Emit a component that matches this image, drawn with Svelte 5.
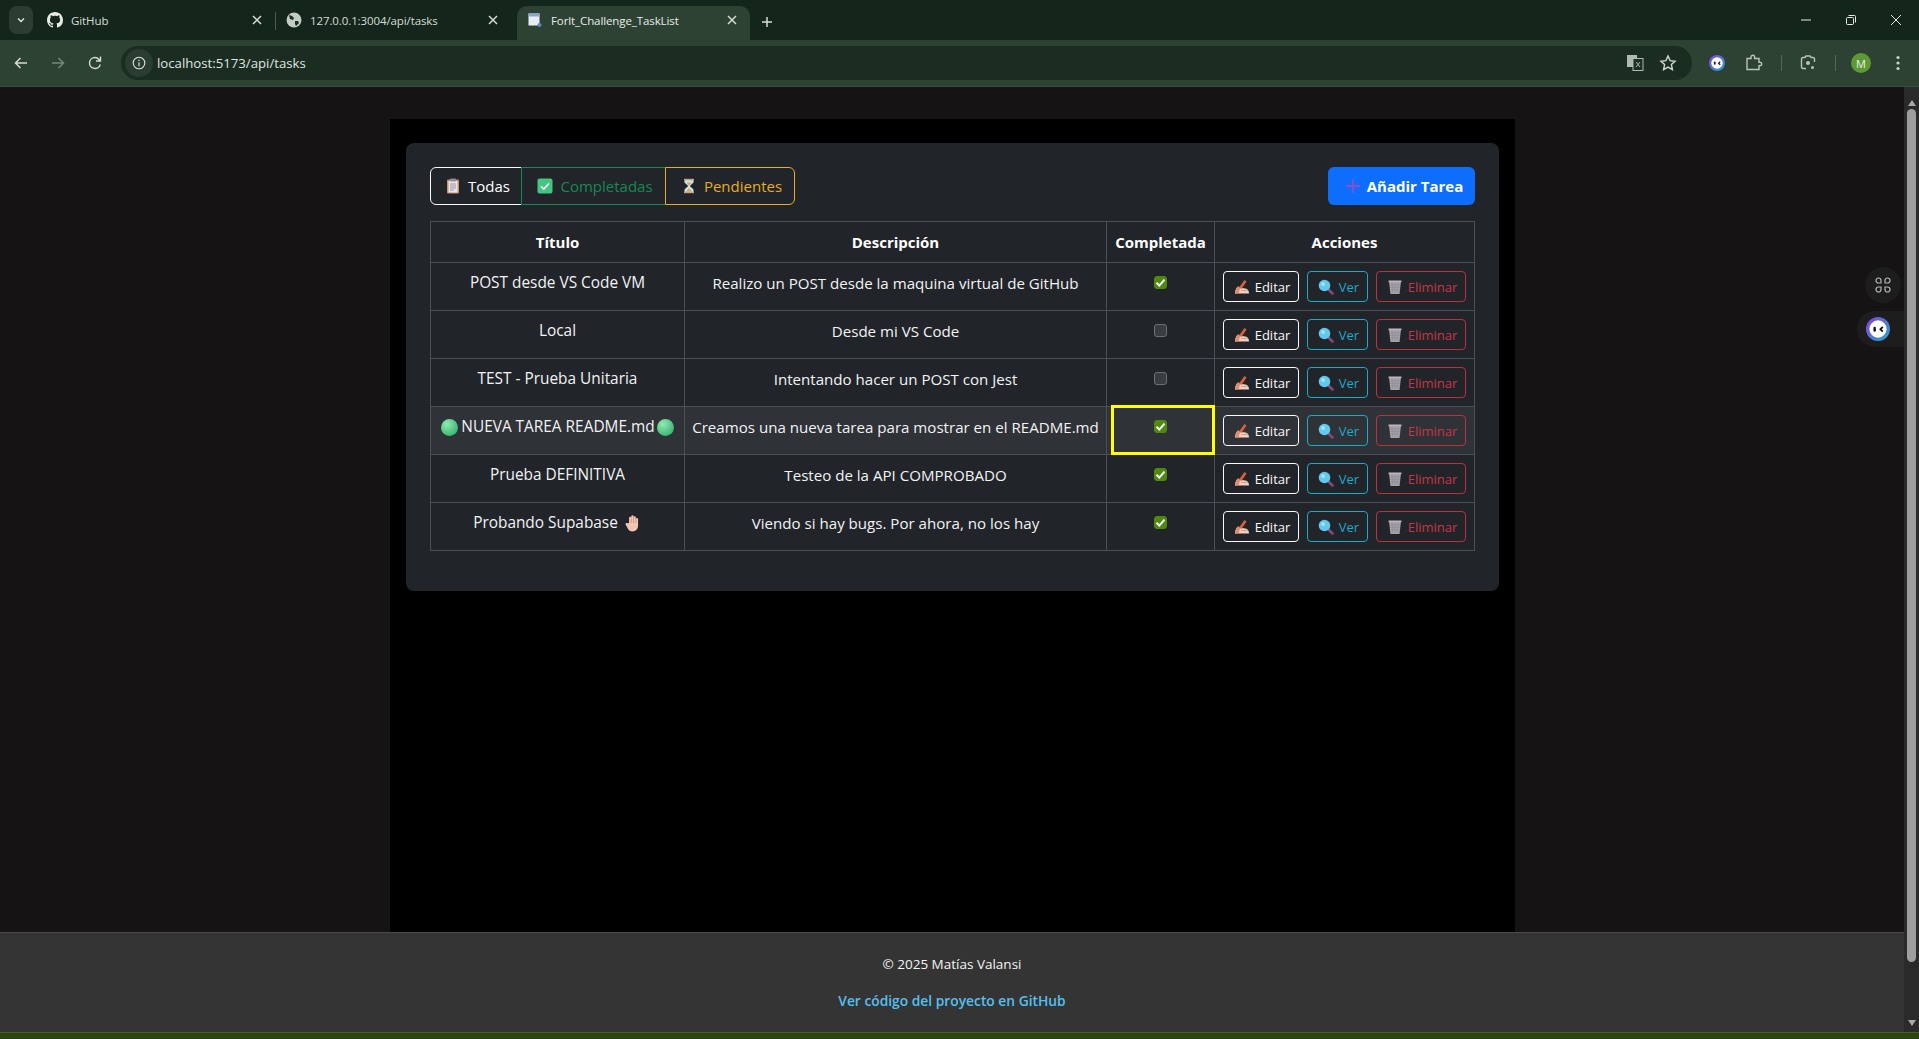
<script>
  const tasks = [
    { title: 'POST desde VS Code VM', desc: 'Realizo un POST desde la maquina virtual de GitHub', done: true },
    { title: 'Local', desc: 'Desde mi VS Code', done: false },
    { title: 'TEST - Prueba Unitaria', desc: 'Intentando hacer un POST con Jest', done: false },
    { title: 'NUEVA TAREA README.md', desc: 'Creamos una nueva tarea para mostrar en el README.md', done: true, hot: true },
    { title: 'Prueba DEFINITIVA', desc: 'Testeo de la API COMPROBADO', done: true },
    { title: 'Probando Supabase', desc: 'Viendo si hay bugs. Por ahora, no los hay', done: true, hand: true }
  ];
</script>

{#snippet clipboard()}
  <svg class="emoji" viewBox="0 0 16 16"><rect x="2" y="1.500" width="12" height="14" rx="1" fill="#c98f6b"/><rect x="3.500" y="3" width="9" height="11.500" fill="#ece6ea"/><rect x="5" y="0.500" width="6" height="3" rx="1" fill="#8d8d99"/><path d="M5 6h6M5 8h6M5 10h6M5 12h4" stroke="#9b93a8" stroke-width="1"/></svg>
{/snippet}
{#snippet checkEmoji()}
  <svg class="emoji" viewBox="0 0 16 16"><rect x="0.500" y="0.500" width="15" height="15" rx="2" fill="#43c77e"/><path d="M4 8.300l2.800 2.800L12 5.500" fill="none" stroke="#fff" stroke-width="1.600"/></svg>
{/snippet}
{#snippet hourglass()}
  <svg class="emoji" viewBox="0 0 16 16"><path d="M3.500 2h9v2.500L8.800 8l3.700 3.500V14h-9v-2.500L7.200 8 3.500 4.500z" fill="#cfe3ee"/><path d="M5.500 4.500h5L8 7.500zM4.800 13.500L8 10l3.200 3.500z" fill="#e8a33d"/><rect x="3" y="0.800" width="10" height="1.600" fill="#c4a58a"/><rect x="3" y="13.600" width="10" height="1.600" fill="#c4a58a"/></svg>
{/snippet}
{#snippet plus()}
  <svg class="emoji plus" viewBox="0 0 16 16"><path d="M8 1v14M1 8h14" stroke="#8a4fc9" stroke-width="1.800"/></svg>
{/snippet}
{#snippet writing()}
  <svg class="emoji" viewBox="0 0 16 16"><path d="M1 14.500c0-3 1.200-5.500 3-7l3.500 1.500 4 .5c2 .5 3.500 2 3.500 5z" fill="#f3d3c0"/><path d="M1 14.500c0-3 1.200-5.500 3-7l2.500 1.500C5.500 10.500 5 12.500 5 14.500z" fill="#dc8f6c"/><path d="M5 8.500L10.500 1l2 1.400L7.500 10z" fill="#d9623c"/><path d="M7.500 11.500h6" stroke="#c99b82" stroke-width="1"/></svg>
{/snippet}
{#snippet magnifier()}
  <svg class="emoji" viewBox="0 0 16 16"><path d="M9.500 9.500l5 5" stroke="#7d4a86" stroke-width="2.600" stroke-linecap="round"/><circle cx="6.500" cy="6.500" r="5.800" fill="#62c8ee"/><circle cx="5" cy="5" r="2" fill="#a3e2f7"/></svg>
{/snippet}
{#snippet trash()}
  <svg class="emoji" viewBox="0 0 16 16"><path d="M2 2.500h12l-1.500 12.500h-9z" fill="#a5a2ab"/><path d="M5 4l.7 10M8 4v10M11 4l-.7 10M3 6h10M3.200 8.500h9.600M3.500 11h9" stroke="#8f8c96" stroke-width="0.700"/><rect x="1.500" y="1.500" width="13" height="1.600" fill="#b9b7bd"/></svg>
{/snippet}
{#snippet hand()}
  <svg class="emoji handicon" viewBox="0 0 16 16"><path d="M4.500 8V3.500a1 1 0 012 0V2a1 1 0 012 0v1a1 1 0 012 0v1.500a1 1 0 012 0V10c0 3.500-2 5.500-5 5.500-2 0-3-1-4-2.500L1.500 9.500c-.6-1 .6-2 1.500-1.200z" fill="#f2c4b2"/><path d="M6.500 4v4M8.500 3v5M10.500 4v4" stroke="#d98f78" stroke-width="0.700"/></svg>
{/snippet}
{#snippet dot()}
  <svg class="emoji dot" viewBox="0 0 16 16"><defs><radialGradient id="ball" cx="0.350" cy="0.300" r="0.800"><stop offset="0" stop-color="#8eeab0"/><stop offset="1" stop-color="#35b06e"/></radialGradient></defs><circle cx="8" cy="8" r="8" fill="url(#ball)"/></svg>
{/snippet}
{#snippet bot(size)}
  <svg width={size} height={size} viewBox="0 0 20 20"><defs><linearGradient id="ring" x1="0" y1="0" x2="1" y2="1"><stop offset="0" stop-color="#8b3fd9"/><stop offset="1" stop-color="#22a7d0"/></linearGradient></defs><circle cx="10" cy="10" r="10" fill="url(#ring)"/><circle cx="10" cy="10" r="7.200" fill="#fff"/><rect x="6.200" y="8.200" width="2" height="4" rx="1" fill="#111"/><path d="M14 8.200l-2 2 2 2" fill="none" stroke="#111" stroke-width="1.500"/></svg>
{/snippet}
{#snippet closeX()}
  <svg class="tabx" width="10" height="10" viewBox="0 0 10 10"><path d="M1 1l8 8M9 1L1 9" stroke="#d3dcd6" stroke-width="1.500"/></svg>
{/snippet}

<div class="window">
  <header class="chrome">
    <div class="tabstrip">
      <button class="tabmenu" aria-label="Tabs">
        <svg width="10" height="10" viewBox="0 0 10 10"><path d="M2 3.500l3 3 3-3" fill="none" stroke="#dfe6e0" stroke-width="1.400"/></svg>
      </button>
      <div class="tab">
        <svg width="16" height="16" viewBox="0 0 16 16"><path fill="#e6ebe7" d="M8 0C3.580 0 0 3.580 0 8c0 3.540 2.290 6.530 5.470 7.590.4.070.55-.17.55-.38 0-.19-.01-.82-.01-1.490-2.010.37-2.530-.49-2.690-.94-.09-.23-.48-.94-.82-1.130-.28-.15-.68-.52-.01-.53.63-.01 1.080.58 1.230.82.720 1.210 1.870.87 2.330.66.070-.52.28-.87.51-1.070-1.780-.2-3.640-.89-3.640-3.950 0-.87.31-1.590.82-2.150-.08-.2-.36-1.020.08-2.120 0 0 .67-.21 2.200.82.64-.18 1.320-.27 2-.27.68 0 1.360.09 2 .27 1.530-1.040 2.200-.82 2.200-.82.44 1.100.16 1.920.08 2.120.51.56.82 1.270.82 2.150 0 3.070-1.870 3.750-3.650 3.950.29.25.54.730.54 1.480 0 1.070-.01 1.930-.01 2.200 0 .21.15.46.55.38A8.013 8.013 0 0016 8c0-4.420-3.580-8-8-8z"/></svg>
        <span class="tabtitle">GitHub</span>
        {@render closeX()}
      </div>
      <i class="tabsep"></i>
      <div class="tab second">
        <svg width="16" height="16" viewBox="0 0 16 16"><circle cx="8" cy="8" r="7.500" fill="#c3cbc5"/><path d="M3 3l3 1 2 2-1 2-3-1zM9 9l3 0 1 2-3 3-1-2z" fill="#1b2c21"/></svg>
        <span class="tabtitle">127.0.0.1:3004/api/tasks</span>
        {@render closeX()}
      </div>
      <div class="tab active">
        <svg width="16" height="16" viewBox="0 0 16 16"><rect x="1.500" y="1.500" width="11" height="12" fill="#e6edf6"/><rect x="1.500" y="1.500" width="11" height="3" fill="#8aa6cc"/><circle cx="12.500" cy="13" r="2" fill="#5b8bcf"/></svg>
        <span class="tabtitle">Forlt_Challenge_TaskList</span>
        {@render closeX()}
      </div>
      <svg class="newtab" width="12" height="12" viewBox="0 0 12 12"><path d="M6 1v10M1 6h10" stroke="#d5ddd7" stroke-width="1.500"/></svg>
      <div class="winctrl">
        <svg width="12" height="12" viewBox="0 0 12 12"><path d="M1 6h10" stroke="#e8e8e8" stroke-width="1"/></svg>
        <svg width="12" height="12" viewBox="0 0 12 12"><rect x="1.500" y="3.500" width="7" height="7" rx="1" fill="none" stroke="#e8e8e8"/><path d="M3.500 1.500h6a1 1 0 011 1v6" fill="none" stroke="#e8e8e8"/></svg>
        <svg width="12" height="12" viewBox="0 0 12 12"><path d="M1 1l10 10M11 1L1 11" stroke="#e8e8e8" stroke-width="1"/></svg>
      </div>
    </div>
    <div class="toolbar">
      <svg class="nav first" width="16" height="16" viewBox="0 0 16 16"><path d="M14 8H3M7.500 3L2.500 8l5 5" fill="none" stroke="#d3dcd5" stroke-width="1.500"/></svg>
      <svg class="nav" width="16" height="16" viewBox="0 0 16 16"><path d="M2 8h11M8.500 3l5 5-5 5" fill="none" stroke="#76867b" stroke-width="1.500"/></svg>
      <svg class="nav" width="16" height="16" viewBox="0 0 16 16"><path d="M13.300 9.500A5.500 5.500 0 118 2.500c1.700 0 3 .8 4 2l1.300 1.500M13.500 1.500V6H9" fill="none" stroke="#d3dcd5" stroke-width="1.400"/></svg>
      <div class="omnibox">
        <span class="siteinfo">
          <svg width="14" height="14" viewBox="0 0 14 14"><circle cx="7" cy="7" r="5.800" fill="none" stroke="#dbe3dd" stroke-width="1.100"/><path d="M7 6.200v4M7 3.800v1.200" stroke="#dbe3dd" stroke-width="1.200"/></svg>
        </span>
        <span class="url">localhost:5173/api/tasks</span>
        <svg class="translate" width="18" height="18" viewBox="0 0 18 18"><rect x="1" y="1" width="10" height="12" fill="#aebbb1"/><rect x="7" y="4.500" width="10" height="12" fill="#1d2e23" stroke="#aebbb1"/><path d="M10 8l4 5M14 8l-4 5" stroke="#aebbb1"/></svg>
        <svg width="18" height="18" viewBox="0 0 18 18"><path d="M9 2l2.100 4.600 5 .6-3.700 3.400 1 5L9 13.100 4.600 15.600l1-5L1.900 7.200l5-.6z" fill="none" stroke="#cfd9d2" stroke-width="1.400"/></svg>
      </div>
      <div class="exts">
        <span class="ext-bot">{@render bot(16)}</span>
        <svg class="puzzle" width="18" height="18" viewBox="0 0 18 18"><path d="M2 4.500h4V3a1.800 1.800 0 013.600 0v1.500H14v3.700h1a1.800 1.800 0 010 3.600h-1V15.500H2z" fill="none" stroke="#b9c5bc" stroke-width="1.400"/></svg>
        <i class="barsep"></i>
        <svg class="lens" width="18" height="18" viewBox="0 0 18 18"><path d="M6 3.500H4a1.500 1.500 0 00-1.500 1.500v8A1.500 1.500 0 004 14.500h3M12 3.500h2a1.500 1.500 0 011.500 1.500v3M6 3.500l1-1.500h4l1 1.500" fill="none" stroke="#b9c5bc" stroke-width="1.400"/><circle cx="9" cy="9" r="2" fill="#b9c5bc"/><circle cx="13.500" cy="13.500" r="1.500" fill="#b9c5bc"/></svg>
        <i class="barsep"></i>
        <span class="avatar">M</span>
        <svg class="dots" width="14" height="18" viewBox="0 0 14 18"><circle cx="7" cy="3.500" r="1.600" fill="#c9d4cc"/><circle cx="7" cy="9" r="1.600" fill="#c9d4cc"/><circle cx="7" cy="14.500" r="1.600" fill="#c9d4cc"/></svg>
      </div>
    </div>
  </header>

  <div class="viewport">
    <div class="page">
      <main class="column">
        <section class="panel">
          <div class="top">
            <div class="filters">
              <button class="filter all">{@render clipboard()} Todas</button>
              <button class="filter done">{@render checkEmoji()} Completadas</button>
              <button class="filter pending">{@render hourglass()} Pendientes</button>
            </div>
            <button class="add">{@render plus()} Añadir Tarea</button>
          </div>

          <table>
            <colgroup>
              <col class="c1" /><col class="c2" /><col class="c3" /><col class="c4" />
            </colgroup>
            <thead>
              <tr><th>Título</th><th>Descripción</th><th>Completada</th><th>Acciones</th></tr>
            </thead>
            <tbody>
              {#each tasks as t}
                <tr class:hot={t.hot}>
                  <td class="titletd">
                    <span class="titlecell">
                      {#if t.hot}{@render dot()}{/if}{t.title}{#if t.hot}{@render dot()}{/if}{#if t.hand}<span class="handgap">{@render hand()}</span>{/if}
                    </span>
                  </td>
                  <td class="desc">{t.desc}</td>
                  <td class="checkcell">
                    <span class="check" class:on={t.done}>
                      {#if t.done}<svg width="11" height="11" viewBox="0 0 11 11"><path d="M1.500 5.800l2.800 2.800 5.200-6" fill="none" stroke="#fff" stroke-width="2"/></svg>{/if}
                    </span>
                    {#if t.hot}<span class="focus"></span>{/if}
                  </td>
                  <td>
                    <div class="actions">
                      <button class="act edit">{@render writing()} Editar</button>
                      <button class="act view">{@render magnifier()} Ver</button>
                      <button class="act del">{@render trash()} Eliminar</button>
                    </div>
                  </td>
                </tr>
              {/each}
            </tbody>
          </table>
        </section>
      </main>

      <footer>
        <p>© 2025 Matías Valansi</p>
        <a href="#top">Ver código del proyecto en GitHub</a>
      </footer>

      <div class="float shortcut">
        <svg width="20" height="20" viewBox="0 0 20 20"><path d="M8 8H5.500A2.500 2.500 0 118 5.500zM12 8V5.500A2.500 2.500 0 1114.500 8zM8 12v2.500A2.500 2.500 0 115.500 12zM12 12h2.500A2.500 2.500 0 1112 14.500z" fill="none" stroke="#b4b4b4" stroke-width="1.200"/></svg>
      </div>
      <div class="float pill">{@render bot(24)}</div>
    </div>

    <div class="scrollbar">
      <i class="arrow up"></i>
      <i class="thumb"></i>
      <i class="arrow down"></i>
    </div>
  </div>

  <div class="taskbar"></div>
</div>

<style>
  :global(body) { margin: 0; background: #000; }

  .window {
    height: 1039px;
    width: 1919px;
    display: flex;
    flex-direction: column;
    overflow: hidden;
    font-family: "Open Sans", "Noto Sans", sans-serif;
    color: #fff;
  }

  /* browser chrome */
  .chrome { flex: none; }
  .tabstrip {
    height: 40px;
    background: #14261b;
    display: flex;
    align-items: flex-end;
    padding-left: 9px;
    font-size: 11.500px;
    color: #d5ddd7;
  }
  .tabmenu {
    width: 24px;
    height: 28px;
    margin-bottom: 6px;
    border: 0;
    border-radius: 8px;
    background: #2b3d31;
    display: flex;
    align-items: center;
    justify-content: center;
    padding: 0;
  }
  .tab {
    width: 242px;
    height: 34px;
    padding: 0 0 6px 14px;
    box-sizing: border-box;
    display: flex;
    align-items: center;
    gap: 8px;
  }
  .tab.second { width: 239px; margin-left: -4px; }
  .tab.active {
    width: 233px;
    margin-left: 6px;
    background: #2e4234;
    border-radius: 10px 10px 0 0;
    color: #e6ece8;
    padding-left: 10px;
  }
  .tabtitle { flex: 1; white-space: nowrap; letter-spacing: -0.100px; }
  .tabx { width: 10px; height: 10px; margin-right: 13px; flex: none; }
  .tabsep { width: 1px; height: 18px; background: #4a5a4f; margin: 0 0 10px 0; }
  .newtab { margin: 0 0 12px 11px; }
  .winctrl {
    margin-left: auto;
    margin-bottom: 14px;
    padding-right: 17px;
    display: flex;
    gap: 33px;
    align-self: flex-end;
  }

  .toolbar {
    height: 47px;
    box-sizing: border-box;
    background: #2e4234;
    display: flex;
    align-items: center;
    padding-left: 13px;
    border-bottom: 1px solid #3a4a3f;
  }
  .nav { margin-right: 21px; }
  .omnibox {
    width: 1571px;
    height: 34px;
    margin-left: -3px;
    box-sizing: border-box;
    background: #1b2c21;
    border-radius: 17px;
    display: flex;
    align-items: center;
    padding: 0 15px 0 4px;
    gap: 15px;
  }
  .siteinfo {
    width: 28px;
    height: 28px;
    border-radius: 50%;
    background: #2b3d31;
    display: flex;
    align-items: center;
    justify-content: center;
  }
  .url { flex: 1; margin-left: -11px; font-size: 13.200px; color: #dfe6e1; }
  .exts {
    flex: 1;
    display: flex;
    align-items: center;
    padding-left: 17px;
    gap: 18px;
  }
  .ext-bot { display: flex; }
  .puzzle { margin-left: 2px; }
  .lens { margin-left: -1px; }
  .barsep { width: 1px; height: 16px; background: #54665a; }
  .avatar {
    width: 20px;
    height: 20px;
    margin-left: -3px;
    border-radius: 50%;
    background: #5d9a36;
    font-size: 11px;
    display: flex;
    align-items: center;
    justify-content: center;
    color: #e9f3e2;
  }
  .dots { margin-left: 2px; }

  /* page */
  .viewport { flex: 1; display: flex; min-height: 0; }
  .page {
    position: relative;
    flex: 1;
    display: flex;
    flex-direction: column;
    background: #151314;
    padding-top: 32px;
  }
  .column {
    flex: 1;
    width: 1125px;
    margin-left: 390px;
    box-sizing: border-box;
    background: #000;
    padding: 24px 16px 0;
  }
  .panel {
    width: 1093px;
    height: 448px;
    box-sizing: border-box;
    background: #212529;
    border-radius: 8px;
    padding: 24px;
  }
  .top {
    display: flex;
    justify-content: space-between;
    align-items: flex-start;
    margin-bottom: 16px;
  }
  .filters { display: flex; }
  .filter {
    height: 38px;
    box-sizing: border-box;
    background: transparent;
    font: inherit;
    font-size: 15px;
    border: 1px solid;
    padding: 0 0 0 3px;
    display: flex;
    align-items: center;
    justify-content: center;
    gap: 7px;
  }
  .filter.all { width: 92px; color: #fff; border-color: #f8f9fa; border-radius: 6px 0 0 6px; }
  .filter.done { width: 145px; margin-left: -1px; color: #198754; border-color: #198754; }
  .filter.pending { width: 130px; margin-left: -1px; color: #e5ac26; border-color: #e5ac26; border-radius: 0 6px 6px 0; }
  .add {
    width: 147px;
    height: 38px;
    border: 0;
    border-radius: 6px;
    background: #0d6efd;
    color: #fff;
    font: inherit;
    font-size: 15px;
    font-weight: 700;
    display: flex;
    align-items: center;
    justify-content: center;
    gap: 6px;
    padding: 0 0 0 7px;
  }
  .emoji { width: 16px; height: 16px; flex: none; }
  .plus { margin-left: -2px; }

  table {
    width: 1044px;
    table-layout: fixed;
    border-collapse: collapse;
    font-size: 15px;
    color: #f1f3f5;
  }
  .c1 { width: 254px; }
  .c2 { width: 422px; }
  .c3 { width: 108px; }
  .c4 { width: 260px; }
  th, td {
    border: 1px solid #495057;
    text-align: center;
    vertical-align: top;
    padding: 8px;
    line-height: 24px;
    height: 47px;
    box-sizing: border-box;
  }
  th { height: 41px; font-weight: 700; padding: 8px; color: #fff; }
  tr.hot td { background: #2f3237; }
  .titletd { font-size: 15.400px; }
  .desc { font-size: 15.100px; white-space: nowrap; padding: 8px 0; }
  .titlecell {
    display: inline-flex;
    align-items: center;
    justify-content: center;
    white-space: nowrap;
  }
  .dot { width: 17px; height: 17px; margin: 0 3px 0 0; }
  .dot:last-child { margin: 0 0 0 2px; }
  .handgap { margin-left: 6px; display: flex; }
  .handicon { width: 18px; height: 18px; }

  .checkcell { position: relative; }
  .check {
    display: block;
    width: 13px;
    height: 13px;
    margin: 5px auto 0;
    box-sizing: border-box;
    border: 1px solid #6c7075;
    border-radius: 3px;
    background: #3a3d40;
    position: relative;
  }
  .check.on {
    background: #4f8a10;
    border-color: #4f8a10;
    display: flex;
    align-items: center;
    justify-content: center;
  }
  .focus {
    position: absolute;
    left: 4px;
    right: -1px;
    top: -2px;
    bottom: -1px;
    border: 3px solid #ffff00;
    pointer-events: none;
  }

  .actions { display: flex; gap: 8px; justify-content: center; }
  .act {
    height: 31px;
    box-sizing: border-box;
    background: transparent;
    border: 1px solid;
    border-radius: 4px;
    font: inherit;
    font-size: 13px;
    padding: 0 0 0 2px;
    display: flex;
    align-items: center;
    justify-content: center;
    gap: 5px;
  }
  .edit { width: 76px; color: #f8f9fa; border-color: #f8f9fa; }
  .view { width: 61px; color: #1fa9c9; border-color: #1fa9c9; }
  .del { width: 90px; color: #c93545; border-color: #b8333f; }

  footer {
    flex: none;
    height: 100px;
    box-sizing: border-box;
    background: #343434;
    border-top: 1px solid #4a4a4a;
    text-align: center;
    font-size: 13.500px;
    padding-top: 22px;
  }
  footer p { margin: 0 0 17px; line-height: 19px; color: #f5f5f5; }
  footer a { line-height: 19px; font-size: 13.800px; color: #55c0ee; font-weight: 600; text-decoration: none; }

  .float {
    position: absolute;
    background: #1d1d1d;
    display: flex;
    align-items: center;
  }
  .shortcut {
    left: 1865px;
    top: 180px;
    width: 36px;
    height: 36px;
    border-radius: 50%;
    justify-content: center;
  }
  .pill {
    left: 1857px;
    top: 224px;
    width: 47px;
    height: 36px;
    border-radius: 18px 0 0 18px;
    padding-left: 9px;
    box-sizing: border-box;
  }

  .scrollbar {
    flex: none;
    width: 15px;
    background: #2a2a2a;
    display: flex;
    flex-direction: column;
    align-items: center;
    padding: 13px 0 6px;
    box-sizing: border-box;
  }
  .thumb { flex: 1; width: 9px; background: #9e9e9e; border-radius: 5px; margin: 3px 0 58px; }
  .arrow { width: 0; height: 0; border-left: 4.500px solid transparent; border-right: 4.500px solid transparent; }
  .arrow.up { border-bottom: 6px solid #a8a8a8; }
  .arrow.down { border-top: 6px solid #a8a8a8; }

  .taskbar { flex: none; height: 7px; background: #2c4510; border-top: 1px solid #44602a; box-sizing: border-box; }
</style>
